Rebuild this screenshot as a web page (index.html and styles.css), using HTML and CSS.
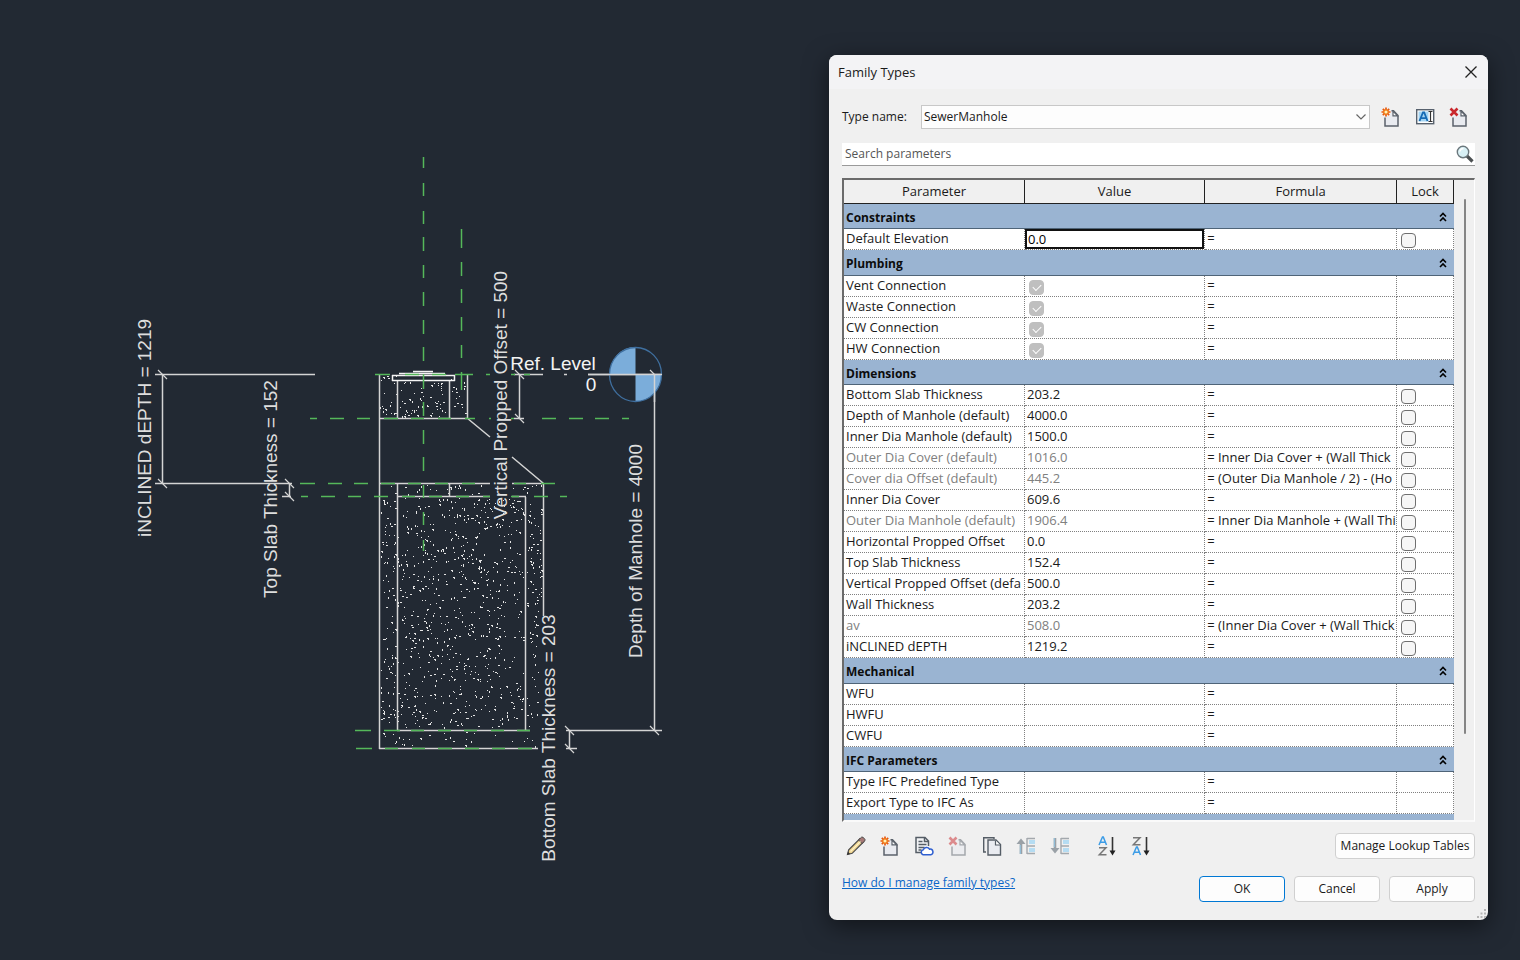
FILE: index.html
```
<!DOCTYPE html>
<html lang="en">
<head>
<meta charset="utf-8">
<title>Family Types</title>
<link rel="stylesheet" href="styles.css">
</head>
<body>
<svg class="defs" width="0" height="0" aria-hidden="true">
  <defs>
    <symbol id="page" viewBox="0 0 20 20">
      <path d="M4 9.500V19h13V8.500L12.500 3.700H9.500V8z" fill="#e9ebf0"/>
      <path d="M4 10.500V19h13V8.500L12.500 3.700H10.500" fill="none" stroke="#5b626b" stroke-width="1.500"/>
      <path d="M12 4.200v4.600h4.500z" fill="#fff" stroke="#5b626b" stroke-width="1.200"/>
    </symbol>
    <symbol id="new" viewBox="0 0 20 20">
      <use href="#page"/>
      <path d="M5 .5v9M.5 5h9M1.800 1.800l6.400 6.400M8.200 1.800L1.800 8.200" stroke="#e8590f" stroke-width="1.700"/>
      <circle cx="5" cy="5" r="2.200" fill="#fff3b8" stroke="#f07a14" stroke-width="1.200"/>
    </symbol>
    <symbol id="delete" viewBox="0 0 20 20">
      <use href="#page"/>
      <path d="M1.500 1.500l7 7M8.500 1.500l-7 7" stroke="#c9282d" stroke-width="2.600"/>
    </symbol>
    <symbol id="chev" viewBox="0 0 8 10">
      <path d="M1 4.500L4 1.500l3 3M1 9l3-3 3 3" fill="none" stroke="#000" stroke-width="1.600"/>
    </symbol>
    <symbol id="tree" viewBox="0 0 20 20">
      <path d="M11 2v16M11 2.500h8M11 10h8M11 17.500h8" fill="none" stroke="#a3a8ad" stroke-width="1.400"/>
      <path d="M13 4h6v4h-6zM13 12h6v4h-6z" fill="#b5dcf2"/>
    </symbol>
  </defs>
</svg>
<main class="stage">
  <svg class="drawing" viewBox="0 0 829 960" preserveAspectRatio="xMinYMin meet" role="img" aria-label="Manhole section">
    <path id="hatch" class="dots"/>
    <g class="outline">
      <path d="M379.500 374V749M397.500 380V418M449.500 380V418M467.500 374V419M379 418.500H467M467 418l23 19M512 457l31 26M379 483.500H490M512 483.500H544M397.500 483V730M449.500 483V497M543.500 483V616M525.500 497V730M397 496.500H490M512 496.500H526M397 730.500H530M379 748.500H538"/>
      <path d="M155 374.500H315M162.500 374V484M155 483.500H292M289.500 483V497M282 496.500H291M519.500 374V419M514 374.500H543M564 374.500H567M588 374.500H662M654.500 374V730M566 730.500H662M569.500 730V749M566 748.500H577M514 418.500H524"/>
      <path d="M158 370l9 9M158 479l9 9M285 479l9 9M285 492l9 9M515 370l9 9M515 414l9 9M650 370l9 9M650 726l9 9M565 726l9 9M565 744l9 9" class="tick"/>
      <path d="M392 380.500H455M392.500 375V381M454.500 375V381M392 375.500H455M399 373.500H445M413 371.500H433" class="lid"/>
    </g>
    <g class="datum">
      <path d="M635.500 374.500V347a26 27 0 0 0-26 27.500zM635.500 374.500h26a26 27 0 0 1-26 27z" class="datum-fill"/>
      <ellipse cx="635.500" cy="374.500" rx="26" ry="27"/>
    </g>
    <path class="outline" d="M588 374.500H662M654.500 374V402"/>
    <g class="ref">
      <path d="M423.500 157v11M423.500 183v13M423.500 211v13M423.500 237v14M423.500 265v13M423.500 292v14M423.500 320v14M423.500 347v14M423.500 374v15M423.500 402v14M423.500 430v14M423.500 457v14M423.500 485v13M423.500 512v13M423.500 540v11"/>
      <path d="M461.500 229v19M461.500 262v14M461.500 289v14M461.500 317v14M461.500 345v13M461.500 372v18"/>
      <path d="M375 374.500h15M405 374.500h14M432 374.500h14M455 374.500h18M486 374.500h4M511 374.500h4M524 374.500h6"/>
      <path d="M310 418.500h7M330 418.500h14M357 418.500h13M384 418.500h14M411 418.500h13M438 418.500h13M465 418.500h10M489 418.500h2M511 418.500h3M542 418.500h14M569 418.500h14M595 418.500h14M622 418.500h7"/>
      <path d="M300 483.500h15M328 483.500h14M354 483.500h14M381 483.500h14M408 483.500h13M435 483.500h13M462 483.500h13M514 483.500h12M541 483.500h14"/>
      <path d="M301 496.500h7M321 496.500h14M348 496.500h13M374 496.500h14M402 496.500h13M429 496.500h13M456 496.500h13M483 496.500h7M511 496.500h8M534 496.500h14M560 496.500h7"/>
      <path d="M355 730.500h16M384 730.500h16M411 730.500h13M438 730.500h13M464 730.500h13M491 730.500h13M517 730.500h13M356 748.500h16M385 748.500h13M412 748.500h13M438 748.500h14M465 748.500h14M492 748.500h13M518 748.500h14"/>
    </g>
    <g class="labels">
      <text transform="translate(151 428) rotate(-90)">iNCLINED dEPTH = 1219</text>
      <text transform="translate(277 489) rotate(-90)">Top Slab Thickness = 152</text>
      <text transform="translate(507 395) rotate(-90)">Vertical Propped Offset = 500</text>
      <text transform="translate(642 551) rotate(-90)">Depth of Manhole = 4000</text>
      <text transform="translate(555 738) rotate(-90)">Bottom Slab Thickness = 203</text>
      <text class="level" x="553" y="370">Ref. Level</text>
      <text class="level" x="591" y="391">0</text>
    </g>
  </svg>

  <section class="dialog" role="dialog" aria-labelledby="title">
    <header class="titlebar">
      <h1 id="title">Family Types</h1>
      <button class="icon-btn" aria-label="Close"><svg width="14" height="14" viewBox="0 0 14 14"><path d="M1.500 1.500l11 11M12.500 1.500l-11 11" stroke="#222" stroke-width="1.300"/></svg></button>
    </header>
    <div class="content">
      <div class="type-row">
        <label for="type">Type name:</label>
        <div class="select-wrap">
          <select id="type"><option>SewerManhole</option></select>
          <svg class="arrow" width="10" height="6" viewBox="0 0 10 6"><path d="M.5.5L5 5 9.500.5" fill="none" stroke="#666" stroke-width="1.200"/></svg>
        </div>
        <div class="type-tools">
          <button class="icon-btn" aria-label="New type"><svg width="20" height="20"><use href="#new"/></svg></button>
          <button class="icon-btn" aria-label="Rename type"><svg width="20" height="20" viewBox="0 0 20 20"><rect x="1.700" y="2.700" width="17" height="14" fill="#fff" stroke="#57616d" stroke-width="1.400"/><path d="M3.500 4.500h10v10h-10z" fill="#a5d5f3"/><path d="M4.500 14L8 5.500h1.200L12.500 14M6 11.200h5" fill="none" stroke="#176bb5" stroke-width="1.800"/><path d="M13.500 4.500h4M13.500 14.500h4M15.500 4.500v10" stroke="#333" stroke-width="1.200"/></svg></button>
          <button class="icon-btn" aria-label="Delete type"><svg width="20" height="20"><use href="#delete"/></svg></button>
        </div>
      </div>
      <div class="search">
        <input type="text" aria-label="Search parameters" placeholder="Search parameters">
        <svg width="18" height="18" viewBox="0 0 18 18"><path d="M11 11l5.500 5.500" stroke="#4c5052" stroke-width="3.200"/><circle cx="7" cy="7" r="5.700" fill="#d8f0f5" stroke="#6b777c" stroke-width="1.400"/><path d="M4 6.500A3.500 3.500 0 0 1 7.500 3.500" fill="none" stroke="#fff" stroke-width="1.500"/></svg>
      </div>
      <div class="grid">
        <table>
          <colgroup><col class="c-param"><col class="c-value"><col class="c-formula"><col class="c-lock"></colgroup>
          <thead><tr><th>Parameter</th><th>Value</th><th>Formula</th><th>Lock</th></tr></thead>
          <tbody>
            <tr class="cat"><th colspan="4">Constraints<svg><use href="#chev"/></svg></th></tr>
            <tr><td>Default Elevation</td><td class="edit"><input type="text" value="0.0" aria-label="Default Elevation"></td><td>=</td><td><input type="checkbox" aria-label="Lock Default Elevation"></td></tr>
          </tbody>
          <tbody>
            <tr class="cat"><th colspan="4">Plumbing<svg><use href="#chev"/></svg></th></tr>
            <tr><td>Vent Connection</td><td><input type="checkbox" checked disabled aria-label="Vent Connection"></td><td>=</td><td></td></tr>
            <tr><td>Waste Connection</td><td><input type="checkbox" checked disabled aria-label="Waste Connection"></td><td>=</td><td></td></tr>
            <tr><td>CW Connection</td><td><input type="checkbox" checked disabled aria-label="CW Connection"></td><td>=</td><td></td></tr>
            <tr><td>HW Connection</td><td><input type="checkbox" checked disabled aria-label="HW Connection"></td><td>=</td><td></td></tr>
          </tbody>
          <tbody>
            <tr class="cat"><th colspan="4">Dimensions<svg><use href="#chev"/></svg></th></tr>
            <tr><td>Bottom Slab Thickness</td><td>203.2</td><td>=</td><td><input type="checkbox" aria-label="Lock Bottom Slab Thickness"></td></tr>
            <tr><td>Depth of Manhole (default)</td><td>4000.0</td><td>=</td><td><input type="checkbox" aria-label="Lock Depth of Manhole"></td></tr>
            <tr><td>Inner Dia Manhole (default)</td><td>1500.0</td><td>=</td><td><input type="checkbox" aria-label="Lock Inner Dia Manhole"></td></tr>
            <tr class="calc"><td>Outer Dia Cover (default)</td><td>1016.0</td><td>= Inner Dia Cover + (Wall Thick</td><td><input type="checkbox" aria-label="Lock Outer Dia Cover"></td></tr>
            <tr class="calc"><td>Cover dia Offset (default)</td><td>445.2</td><td>= (Outer Dia Manhole / 2) - (Ho</td><td><input type="checkbox" aria-label="Lock Cover dia Offset"></td></tr>
            <tr><td>Inner Dia Cover</td><td>609.6</td><td>=</td><td><input type="checkbox" aria-label="Lock Inner Dia Cover"></td></tr>
            <tr class="calc"><td>Outer Dia Manhole (default)</td><td>1906.4</td><td>= Inner Dia Manhole + (Wall Thi</td><td><input type="checkbox" aria-label="Lock Outer Dia Manhole"></td></tr>
            <tr><td>Horizontal Propped Offset</td><td>0.0</td><td>=</td><td><input type="checkbox" aria-label="Lock Horizontal Propped Offset"></td></tr>
            <tr><td>Top Slab Thickness</td><td>152.4</td><td>=</td><td><input type="checkbox" aria-label="Lock Top Slab Thickness"></td></tr>
            <tr><td>Vertical Propped Offset (defa</td><td>500.0</td><td>=</td><td><input type="checkbox" aria-label="Lock Vertical Propped Offset"></td></tr>
            <tr><td>Wall Thickness</td><td>203.2</td><td>=</td><td><input type="checkbox" aria-label="Lock Wall Thickness"></td></tr>
            <tr class="calc"><td>av</td><td>508.0</td><td>= (Inner Dia Cover + (Wall Thick</td><td><input type="checkbox" aria-label="Lock av"></td></tr>
            <tr><td>iNCLINED dEPTH</td><td>1219.2</td><td>=</td><td><input type="checkbox" aria-label="Lock iNCLINED dEPTH"></td></tr>
          </tbody>
          <tbody>
            <tr class="cat"><th colspan="4">Mechanical<svg><use href="#chev"/></svg></th></tr>
            <tr><td>WFU</td><td></td><td>=</td><td></td></tr>
            <tr><td>HWFU</td><td></td><td>=</td><td></td></tr>
            <tr><td>CWFU</td><td></td><td>=</td><td></td></tr>
          </tbody>
          <tbody>
            <tr class="cat"><th colspan="4">IFC Parameters<svg><use href="#chev"/></svg></th></tr>
            <tr><td>Type IFC Predefined Type</td><td></td><td>=</td><td></td></tr>
            <tr><td>Export Type to IFC As</td><td></td><td>=</td><td></td></tr>
          </tbody>
          <tbody><tr class="cat"><th colspan="4"></th></tr></tbody>
        </table>
        <div class="scroll"><div class="thumb"></div></div>
      </div>
      <div class="tools">
        <button class="icon-btn" aria-label="Edit parameter"><svg width="20" height="20" viewBox="0 0 20 20"><path d="M1.500 18.500l1.200-4.700L14 2.500l3.500 3.500L6.200 17.300z" fill="#ecd08a" stroke="#4a4a4a" stroke-width="1.200"/><path d="M12.500 4L14.500 2l1-.8h1.500L19 3.500v1.200L16 7.500z" fill="#a77a78" stroke="#4a4a4a"/><path d="M4.500 15.500L14.500 5.500" stroke="#fff3c9" stroke-width="1.200"/><path d="M1.200 18.800l.8-3 2.200 2.200z" fill="#333"/></svg></button>
        <button class="icon-btn" aria-label="New parameter"><svg width="20" height="20"><use href="#new"/></svg></button>
        <button class="icon-btn" aria-label="Shared parameter"><svg width="20" height="20" viewBox="0 0 20 20"><path d="M8 16.500H2V1.500h9l3.500 3.500V10" fill="#f3f4f6" stroke="#555d66" stroke-width="1.500"/><path d="M10.500 1.500v4h4M4.500 5.500h4M4.500 8.500h8M4.500 11.500h6M4.500 14h3" fill="none" stroke="#555d66" stroke-width="1.500"/><path d="M9 18.700a2.600 2.600 0 0 1 .3-5A3.400 3.400 0 0 1 15.500 13.200a2.800 2.800 0 0 1 1.200 5.500z" fill="#fff" stroke="#2f5fd0" stroke-width="1.500"/></svg></button>
        <button class="icon-btn" disabled aria-label="Delete parameter"><svg width="20" height="20"><use href="#delete"/></svg></button>
        <button class="icon-btn" aria-label="Duplicate parameter"><svg width="20" height="20" viewBox="0 0 20 20"><path d="M4 16H1.700V1.700H12V3" fill="none" stroke="#555d66" stroke-width="1.400"/><path d="M6 4h8l4.500 4.500V19H6z" fill="#e9ebf0" stroke="#555d66" stroke-width="1.400"/><path d="M13.500 4.500v4.500h4.500" fill="#fff" stroke="#555d66" stroke-width="1.200"/></svg></button>
        <button class="icon-btn" aria-label="Move up"><svg width="20" height="20" viewBox="0 0 20 20"><use href="#tree"/><path d="M5 18V5" stroke="#9aa1a7" stroke-width="2.600"/><path d="M4.400 18V9" stroke="#93bdd6" stroke-width="1.200"/><path d="M.5 8L5 2.500 9.500 8z" fill="#9aa1a7"/></svg></button>
        <button class="icon-btn" aria-label="Move down"><svg width="20" height="20" viewBox="0 0 20 20"><use href="#tree"/><path d="M5 2v12" stroke="#9aa1a7" stroke-width="2.600"/><path d="M4.400 2v9" stroke="#93bdd6" stroke-width="1.200"/><path d="M.5 12L5 17.500 9.500 12z" fill="#9aa1a7"/></svg></button>
        <button class="icon-btn sort" aria-label="Sort ascending"><svg width="20" height="20" viewBox="0 0 20 20"><path d="M2 9l3.500-8h.8L9.500 9M3.200 6.200h5.200" fill="none" stroke="#3c9ce6" stroke-width="1.500"/><path d="M2 11.700h7L2.300 18.800h7.200" fill="none" stroke="#777" stroke-width="1.500"/><path d="M15.500 1v14" stroke="#333" stroke-width="1.600"/><path d="M12.500 14.500h6l-3 5z" fill="#222"/></svg></button>
        <button class="icon-btn" aria-label="Sort descending"><svg width="20" height="20" viewBox="0 0 20 20"><path d="M2 19l3.500-8h.8L9.500 19M3.200 16.200h5.200" fill="none" stroke="#3c9ce6" stroke-width="1.500"/><path d="M2 1.700h7L2.300 8.800h7.200" fill="none" stroke="#777" stroke-width="1.500"/><path d="M15.500 1v14" stroke="#333" stroke-width="1.600"/><path d="M12.500 14.500h6l-3 5z" fill="#222"/></svg></button>
        <button class="btn lookup">Manage Lookup Tables</button>
      </div>
      <footer class="footer">
        <a href="#help">How do I manage family types?</a>
        <div class="actions">
          <button class="btn primary">OK</button>
          <button class="btn">Cancel</button>
          <button class="btn">Apply</button>
        </div>
      </footer>
    </div>
    <svg class="grip" width="10" height="10" viewBox="0 0 10 10"><path d="M7 0h2v2H7zM7 3.500h2v2H7zM7 7h2v2H7zM3.500 3.500h2v2h-2zM3.500 7h2v2h-2zM0 7h2v2H0z" fill="#b5b5b5"/></svg>
  </section>
</main>
<script src="hatch.js"></script>
</body>
</html>
```
FILE: hatch.js
```
// Concrete hatch: a repeatable scatter of small specks in each cut region.
var seed = 20;
function rnd() {
  seed = (seed * 1103515245 + 12345) % 2147483648;
  return seed / 2147483648;
}
var regions = [
  [380, 376, 17, 41, 20], [399, 382, 49, 35, 56], [451, 376, 15, 41, 16],
  [381, 485, 108, 10, 24], [513, 485, 29, 10, 8],
  [398, 498, 126, 230, 700], [381, 498, 15, 230, 95],
  [527, 498, 15, 116, 60], [527, 614, 12, 114, 30],
  [381, 732, 156, 15, 28]
];
var d = "";
regions.forEach(function (r) {
  for (var i = 0; i < r[4]; i++) {
    var x = Math.floor(r[0] + rnd() * r[2]);
    var y = Math.floor(r[1] + rnd() * r[3]) + 0.5;
    d += "M" + x + " " + y + "h" + (rnd() < 0.25 ? 2 : 1);
    if (rnd() < 0.25) d += "m-1 1h1";
  }
});
document.getElementById("hatch").setAttribute("d", d);
```
FILE: styles.css
```
* { box-sizing: border-box; }
body {
  margin: 0;
  background: #222933;
  color: #1a1a1a;
  font: 13px/20px "Open Sans", "Noto Sans", sans-serif;
}
.defs { position: absolute; }
.stage { display: flex; min-height: 100vh; align-items: flex-start; }
.drawing { flex: 1; min-width: 0; }
.dots { stroke: #e4e4e4; fill: none; }
.outline { stroke: #d4d4d4; stroke-width: 1.5; fill: none; }
.tick { stroke-width: 1.2; }
.lid { stroke: #f4f4f4; stroke-width: 1.5; }
.ref { stroke: #55b85a; stroke-width: 1.5; fill: none; }
.datum { fill: none; stroke: #3f6f9f; stroke-width: 1.3; }
.datum-fill { fill: #7badda; stroke: none; }
.labels { fill: #dedede; font: 19px "Liberation Sans", Arial, sans-serif; text-anchor: middle; }
.level { fill: #f4f4f4; }

.dialog {
  position: relative;
  flex: none;
  width: 659px;
  margin: 55px 32px 39px 0;
  background: #f0f0f0;
  border-radius: 8px;
  box-shadow: 0 6px 24px rgba(0, 0, 0, .5);
}
.titlebar {
  display: flex;
  align-items: center;
  justify-content: space-between;
  height: 34px;
  padding: 0 10px 0 9px;
  background: #f3f3f5;
  border-radius: 8px 8px 0 0;
}
.titlebar h1 { margin: 0; font-size: 13px; font-weight: 400; }
.icon-btn {
  display: flex;
  padding: 0;
  border: 0;
  background: none;
}
.icon-btn:disabled { opacity: .5; }
.content {
  padding: 16px 13px 18px 13px;
  font: 12px/20px "Open Sans", "Noto Sans", sans-serif;
}
.type-row { display: flex; align-items: center; height: 24px; }
.type-row label { width: 79px; }
.select-wrap { display: flex; flex: 1; align-items: center; position: relative; }
.select-wrap select {
  appearance: none;
  width: 100%;
  height: 24px;
  padding: 0 2px;
  border: 1px solid #c8c8c8;
  border-radius: 0;
  background: #fdfdfd;
  color: #1a1a1a;
  font: inherit;
}
.arrow { position: absolute; right: 4px; }
.type-tools { display: flex; gap: 14px; margin: 0 6px 0 11px; }
.search {
  display: flex;
  align-items: center;
  height: 23px;
  margin: 14px 0 12px;
  padding-right: 1px;
  background: #fff;
  border-bottom: 1px solid #9a9a9a;
}
.search input {
  flex: 1;
  padding: 0 3px;
  border: 0;
  background: none;
  font: inherit;
  font-weight: 500;
}
.search input::placeholder { color: #555; opacity: 1; }

.grid {
  display: flex;
  height: 644px;
  overflow: hidden;
  border: 2px solid #6b6b6b;
  border-right: 1px solid #fff;
  border-bottom: 2px solid #fafafa;
  font: 13px/19px "Open Sans", sans-serif;
}
table {
  flex: 1;
  height: max-content;
  table-layout: fixed;
  border-collapse: separate;
  border-spacing: 0;
  background: #fff;
}
.c-param, .c-value { width: 181px; }
.c-formula { width: 192px; }
.c-lock { width: 57px; }
thead th {
  height: 24px;
  padding: 0;
  background: #f0f0f0;
  border-right: 1px solid #222;
  border-bottom: 1px solid #222;
  font-weight: 400;
}
td {
  height: 21px;
  padding: 0 0 1px 2px;
  overflow: hidden;
  white-space: nowrap;
  border-right: 1px dotted #808080;
  border-bottom: 1px dotted #808080;
}
.cat th {
  height: 25px;
  padding: 2px 7px 0 2px;
  background: #9ab4d2;
  border-bottom: 1px solid #4f6478;
  color: #0c0c0c;
  font-size: 12px;
  text-align: left;
}
tbody:nth-of-type(even) .cat th { height: 26px; }
.cat svg { float: right; width: 8px; height: 10px; margin-top: 4px; }
.calc td { color: #808080; }
.calc td:nth-child(3) { color: #1a1a1a; }
td.edit { padding: 0; }
.edit input {
  display: block;
  width: 100%;
  height: 20px;
  padding: 0 1px;
  border: 2px solid #111;
  font: inherit;
}
td input[type="checkbox"] {
  appearance: none;
  display: block;
  width: 15px;
  height: 15px;
  margin: 3px 0 0 2px;
  border: 1px solid #6f6f6f;
  border-radius: 4px;
  background: #f6f6f6;
}
td input[type="checkbox"]:checked {
  border-color: #bfbfbf;
  background: #bfbfbf;
}
td input[type="checkbox"]:checked::after {
  content: "";
  display: block;
  width: 7px;
  height: 4px;
  margin: 3px;
  border: solid #fff;
  border-width: 0 0 1px 1px;
  transform: rotate(-45deg);
}
.scroll {
  display: flex;
  justify-content: center;
  width: 20px;
  padding: 19px 0 86px 2px;
}
.thumb { width: 2px; border-radius: 1px; background: #858585; }

.tools { display: flex; align-items: center; gap: 14px; height: 24px; margin-top: 12px; padding-left: 4px; }
.sort { margin-left: 13px; }
.btn {
  width: 86px;
  height: 26px;
  padding: 0;
  border: 1px solid #d0d0d0;
  border-radius: 4px;
  background: #fdfdfd;
  color: #1a1a1a;
  font: inherit;
}
.lookup { width: 140px; margin-left: auto; }
.primary { border-color: #0078d4; }
.footer { display: flex; align-items: flex-end; justify-content: space-between; margin-top: 18px; }
.footer a { align-self: flex-start; margin-top: -3px; color: #0a66c8; }
.actions { display: flex; gap: 9px; }
.grip { position: absolute; right: 1px; bottom: 1px; }
```
